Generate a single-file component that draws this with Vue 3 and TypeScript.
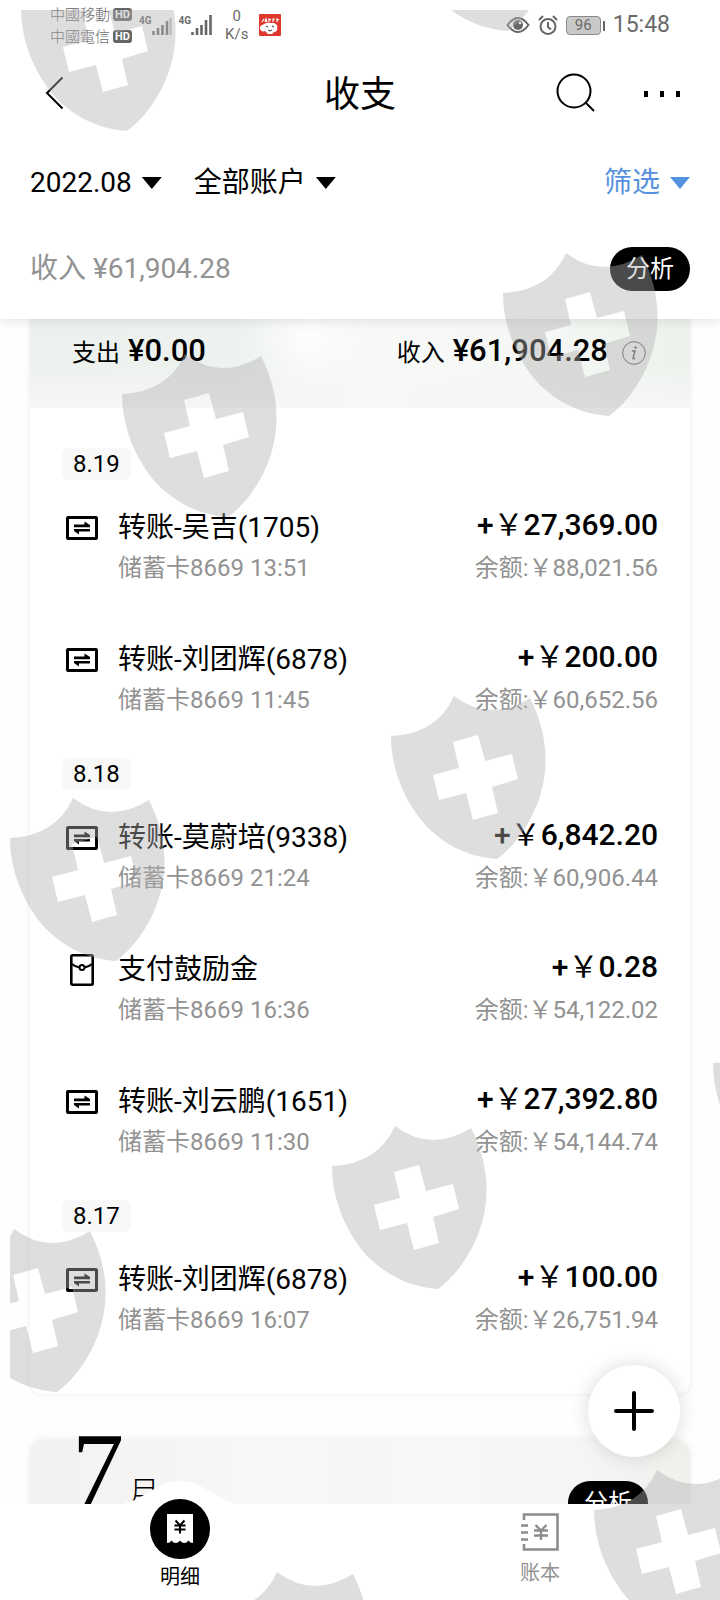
<script setup lang="ts">
interface Entry {
  kind: 'transfer' | 'reward'
  title: string
  detail: string
  amount: string
  balance: string
}

interface Day {
  date: string
  entries: Entry[]
}

// Full-width yen sign, one em wide
const yen = '\uFFE5'

const days: Day[] = [
  {
    date: '8.19',
    entries: [
      { kind: 'transfer', title: '转账-吴吉(1705)', detail: '储蓄卡8669 13:51', amount: '27,369.00', balance: '88,021.56' },
      { kind: 'transfer', title: '转账-刘团辉(6878)', detail: '储蓄卡8669 11:45', amount: '200.00', balance: '60,652.56' },
    ],
  },
  {
    date: '8.18',
    entries: [
      { kind: 'transfer', title: '转账-莫蔚培(9338)', detail: '储蓄卡8669 21:24', amount: '6,842.20', balance: '60,906.44' },
      { kind: 'reward', title: '支付鼓励金', detail: '储蓄卡8669 16:36', amount: '0.28', balance: '54,122.02' },
      { kind: 'transfer', title: '转账-刘云鹏(1651)', detail: '储蓄卡8669 11:30', amount: '27,392.80', balance: '54,144.74' },
    ],
  },
  {
    date: '8.17',
    entries: [
      { kind: 'transfer', title: '转账-刘团辉(6878)', detail: '储蓄卡8669 16:07', amount: '100.00', balance: '26,751.94' },
    ],
  },
]

const carriers: string[] = ['中國移動', '中國電信']

// Top tip of each shield, measured from the watermark layer's corner
const shields: [number, number][] = [
  [74, -42], [455, -142], [556, 243], [175, 344], [444, 686], [63, 788],
  [766, 1013], [385, 1116], [4, 1219], [647, 1460], [267, 1562],
]
</script>

<template>
  <div class="page">
    <header class="top">
      <div class="status">
        <div class="status-left">
          <div class="carriers">
            <div v-for="name in carriers" :key="name" class="carrier">
              <span>{{ name }}</span><b class="hd">HD</b>
            </div>
          </div>
          <div class="signal">
            <b>4G</b>
            <svg width="20" height="20" viewBox="0 0 20 20"><path d="M1.5 16v4M6 13v7M10.5 10v10M15 6v14" stroke="#707070" stroke-width="2.6" /><path d="M18.5 3v17" stroke="#bbb" stroke-width="2" /></svg>
          </div>
          <div class="signal">
            <b>4G</b>
            <svg width="22" height="20" viewBox="0 0 22 20"><path d="M1.5 17v3M6 13v7M10.5 10v10M15 5v15M19.5 0v20" stroke="#666" stroke-width="2.6" /></svg>
          </div>
          <div class="speed"><span>0</span><span>K/s</span></div>
          <svg class="app-mark" width="22" height="22" viewBox="0 0 22 22">
            <rect width="22" height="22" rx="1" fill="#df392f" />
            <path d="M3 8l2-3M6 8l1-3 1 3M10 8V5l2 1M14 8V5h2M18 8V5l2 1" stroke="#fff" stroke-width="1.2" fill="none" />
            <path d="M1 14c0-3 3-3 4-4 3-2 7-1 10-1 3 1 4 3 3 5 1 2-1 4-3 4l-2 2H9l-3-3c-2 1-5 0-5-3z" fill="#fff" />
            <path d="M7 12l2 1M13 12l2 1M9 16q2 2 4 0" stroke="#333" fill="none" />
          </svg>
        </div>
        <div class="status-right">
          <svg width="24" height="18" viewBox="0 0 24 18"><path d="M1.500 9Q12-5 22.500 9 12 23 1.500 9z" fill="none" stroke="#666" stroke-width="2" /><circle cx="12" cy="9" r="5" fill="#666" /><circle cx="14" cy="7" r="1.300" fill="#eee" /></svg>
          <svg width="20" height="20" viewBox="0 0 20 20"><g fill="none" stroke="#666" stroke-width="2"><circle cx="10" cy="11.500" r="7.500" /><path d="M10 7v5l3 2.500M1 5l4-4M19 5l-4-4" /></g></svg>
          <span class="battery">96</span>
          <time>15:48</time>
        </div>
      </div>

      <div class="title-bar">
        <button class="plain" aria-label="返回">
          <svg width="36" height="36" viewBox="0 0 36 36"><path d="M24.500 2.500L9 18l15.500 15.500" fill="none" stroke="#000" stroke-width="2" /></svg>
        </button>
        <h1>收支</h1>
        <div class="title-actions">
          <button class="plain" aria-label="搜索">
            <svg width="40" height="40" viewBox="0 0 40 40"><g fill="none" stroke="#000" stroke-width="2"><circle cx="18" cy="18" r="16.500" /><path d="M30 30l8 8" /></g></svg>
          </button>
          <button class="plain" aria-label="更多">
            <svg width="36" height="40" viewBox="0 0 36 40"><path d="M0 18h4v6H0zM16 18h4v6h-4zM32 18h4v6h-4z" /></svg>
          </button>
        </div>
      </div>

      <div class="filters">
        <button class="plain filter">2022.08<i class="caret"></i></button>
        <button class="plain filter">全部账户<i class="caret"></i></button>
        <button class="plain filter accent">筛选<i class="caret"></i></button>
      </div>

      <div class="summary">
        <span>收入 ¥61,904.28</span>
        <button class="pill-button">分析</button>
      </div>
    </header>

    <main>
      <section class="card">
        <div class="banner">
          <div class="total"><span>支出</span><strong>¥0.00</strong></div>
          <div class="total">
            <span>收入</span><strong>¥61,904.28</strong>
            <button class="plain info" aria-label="说明">
              <svg width="24" height="24" viewBox="0 0 24 24"><g fill="none" stroke="#555"><circle cx="12" cy="12" r="11.300" /><path d="M10 10h3l-2 7.500h2" stroke-width="1.400" /></g><circle cx="13.500" cy="6.500" r="1.200" fill="#555" /></svg>
            </button>
          </div>
        </div>
        <div class="days">
          <section v-for="day in days" :key="day.date" class="day">
            <h2>{{ day.date }}</h2>
            <ul>
              <li v-for="entry in day.entries" :key="entry.detail">
                <span class="kind">
                  <svg v-if="entry.kind === 'transfer'" width="32" height="24" viewBox="0 0 32 24">
                    <rect x="1.500" y="1.500" width="29" height="21" rx=".6" fill="none" stroke="#000" stroke-width="3" />
                    <path d="M8 8.500h10.500V5.500L24 9v2.300H8zM24 13v2.500H13v3L8 15V13z" />
                  </svg>
                  <svg v-else width="24" height="32" viewBox="0 0 24 32">
                    <g fill="none" stroke="#000" stroke-width="2.600"><rect x="1.300" y="1.300" width="21.400" height="29.400" rx="1.200" /><path d="M2 10q3.500 3 7.500 3.500M22 10q-3.500 3-7.500 3.500" stroke-width="2.200" /><circle cx="12" cy="13.500" r="2.500" stroke-width="2" /></g>
                  </svg>
                </span>
                <div class="what">
                  <p class="name">{{ entry.title }}</p>
                  <p class="sub">{{ entry.detail }}</p>
                </div>
                <div class="money">
                  <p class="amount">+<span>{{ yen }}</span>{{ entry.amount }}</p>
                  <p class="sub">余额:{{ yen }}{{ entry.balance }}</p>
                </div>
              </li>
            </ul>
          </section>
        </div>
      </section>

      <section class="card next">
        <div class="month"><b>7</b><span>月</span></div>
        <button class="pill-button">分析</button>
      </section>
    </main>

    <nav>
      <svg class="bump" width="150" height="26" viewBox="0 0 150 26"><path d="M0 26C40 26 46 1 75 1s35 25 75 25z" fill="#fff" /></svg>
      <a href="#details" class="tab active" aria-current="page">
        <svg width="60" height="60" viewBox="0 0 60 60">
          <circle cx="30" cy="30" r="30" />
          <path d="M17 15h26v29q-3 0-4.500-2.500-2 2.500-4.300 2.500T30 41.500Q28 44 25.700 44t-4.200-2.500Q20 44 17 44z" fill="#fff" />
          <path d="M25.500 21.500l4.500 5 4.500-5M30 26v8.500M24.500 26.500h11M24.500 30.500h11" fill="none" stroke="#000" stroke-width="2" />
        </svg>
        <span>明细</span>
      </a>
      <a href="#books" class="tab">
        <svg width="38" height="38" viewBox="0 0 38 38">
          <g fill="none" stroke="#8c8c8c" stroke-width="2.600"><path d="M3 7V1.500h33.500v35H3V31M0 12.500h7M0 19.500h7M0 26.500h7" /><path d="M14.500 12l5.500 5.500 5.500-5.500M20 17v10M13 17.500h14M13 22.500h14" stroke-width="2.300" /></g>
        </svg>
        <span>账本</span>
      </a>
    </nav>

    <button class="add" aria-label="记一笔">
      <svg width="40" height="40" viewBox="0 0 40 40"><path d="M20 2v36M2 20h36" stroke="#000" stroke-width="4" stroke-linecap="round" /></svg>
    </button>

    <div class="watermark" aria-hidden="true">
      <svg width="100%" height="100%">
        <path
          v-for="([x, y], i) in shields"
          :key="i"
          :transform="`translate(${x} ${y})`"
          fill-rule="evenodd"
          d="M0 0Q36 27 76 2C86 22 92 43 91.500 66 91 105 70 143 43 163 16 161-6 151-27 131-48 108-63 75-63 40Q-17 38 0 0zM-1 46L24 39 31 65 58 58 64 83 38 91 44 117 19 124 12 97-15 104-21 79 5 72z"
        />
      </svg>
    </div>
  </div>
</template>

<style>
body { margin: 0; }
</style>

<style scoped>
.page {
  position: relative;
  display: flex;
  flex-direction: column;
  height: 100vh;
  overflow: hidden;
  background: #fff;
  color: #000;
  font-family: Roboto, "Noto Sans CJK SC", sans-serif;
}
svg { display: block; flex: none; }
h1, h2, p, ul { margin: 0; padding: 0; font-weight: 400; }
ul { list-style: none; }
button { font: inherit; cursor: pointer; }
.plain { padding: 0; border: 0; background: none; color: inherit; }

.top {
  position: relative;
  z-index: 1;
  padding-bottom: 11px;
  background: #fff;
  box-shadow: 0 0 12px rgba(0, 0, 0, 0.14);
}
.status {
  display: flex;
  justify-content: space-between;
  align-items: center;
  height: 50px;
  padding: 0 50px;
  color: #6a6a6a;
}
.status-left, .status-right { display: flex; align-items: center; }
.carrier {
  display: flex;
  align-items: center;
  gap: 3px;
  font-family: "Noto Sans CJK TC", sans-serif;
  font-size: 15px;
  font-weight: 300;
  line-height: 22px;
}
.hd {
  border-radius: 3px;
  background: #666;
  color: #fff;
  padding: 0 2px;
  font: 700 11px/13px Roboto, sans-serif;
}
.signal { display: flex; align-items: center; margin-left: 7px; }
.signal b { align-self: flex-start; font-size: 10px; line-height: 12px; }
.speed {
  display: flex;
  flex-direction: column;
  align-items: center;
  margin-left: 12px;
  font-size: 15px;
  line-height: 18px;
}
.app-mark { margin-left: 11px; }
.status-right { gap: 8px; }
.battery {
  position: relative;
  width: 33px;
  border: 1px solid #8a8a8a;
  border-radius: 4px;
  background: #c9c9c9;
  font-size: 15px;
  line-height: 17px;
  text-align: center;
}
.battery::after {
  content: "";
  position: absolute;
  top: 4px;
  right: -5px;
  width: 2px;
  height: 10px;
  background: #666;
}
time { margin-left: 4px; font-size: 23px; line-height: 28px; }

.title-bar {
  display: grid;
  grid-template-columns: 1fr auto 1fr;
  align-items: center;
  height: 86px;
  padding: 0 38px;
}
h1 { padding-top: 4px; font-size: 36px; line-height: 48px; }
.title-bar > .plain { justify-self: start; }
.title-actions { display: flex; justify-content: flex-end; gap: 48px; }
.title-actions .plain:last-child { margin-right: 2px; }

.filters { display: flex; align-items: center; gap: 32px; height: 94px; padding: 0 30px; }
.filter { display: flex; align-items: center; gap: 10px; font-size: 28px; line-height: 40px; }
.caret {
  width: 20px;
  height: 12px;
  background: currentColor;
  clip-path: polygon(0 0, 100% 0, 50% 100%);
}
.accent { margin-left: auto; color: #5591de; }

.summary {
  display: flex;
  justify-content: space-between;
  align-items: center;
  height: 78px;
  padding: 0 30px;
  color: #929292;
  font-size: 28px;
}
.summary span { padding-bottom: 6px; }
.pill-button {
  width: 80px;
  height: 44px;
  padding: 0;
  border: 0;
  border-radius: 22px;
  background: #000;
  color: #fff;
  font-size: 24px;
  line-height: 44px;
}

main { flex: 1; min-height: 0; overflow: hidden; padding: 0 30px; background: #fefefe; }
.card { background: #fff; box-shadow: 0 0 6px rgba(0, 0, 0, 0.08); }
.card:first-child { border-radius: 0 0 12px 12px; }
.banner {
  display: flex;
  justify-content: space-between;
  box-sizing: border-box;
  height: 89px;
  padding: 12px 44px 0 42px;
  background:
    radial-gradient(circle at 42% 20%, rgba(255, 255, 255, 0.8), transparent 14%),
    linear-gradient(to bottom, transparent 50%, #f6f7f6),
    linear-gradient(to right, #edf1ed, #eef2ee 30%, #f8faf7 50%, #f4f7f3 80%, #edf2ed);
}
.total { display: flex; align-items: baseline; height: 44px; gap: 8px; }
.total span { font-size: 24px; }
.total strong { font-size: 31px; font-weight: 500; line-height: 40px; }
.info { align-self: center; margin-left: 6px; }

.days { padding: 40px 32px 16px; }
.day { padding-bottom: 14px; }
h2 {
  width: max-content;
  padding: 0 11px;
  border-radius: 6px;
  background: #f8f8f8;
  font-size: 24px;
  line-height: 32px;
}
li { display: flex; align-items: flex-start; height: 102px; padding-top: 30px; }
.kind {
  display: flex;
  align-items: center;
  justify-content: center;
  width: 32px;
  height: 36px;
  margin: 0 20px 0 4px;
}
.what { flex: 1; }
.name { font-size: 28px; line-height: 36px; }
.sub { margin-top: 6px; color: #929292; font-size: 24px; line-height: 32px; }
.money { text-align: right; }
.amount { padding-bottom: 6px; font-size: 30px; font-weight: 500; line-height: 30px; }
.amount span { font-weight: 400; }

.next {
  display: flex;
  justify-content: space-between;
  align-items: flex-start;
  height: 180px;
  margin-top: 45px;
  padding: 0 42px;
  border-radius: 16px;
  background: linear-gradient(to right, #f4f2f1, #f7f4f4 22%, #f8faf9 40%, #f4f6f5 50%, #f8f8fa 60%, #f5f5f4 85%, #efefec);
}
.month { display: flex; align-items: baseline; gap: 4px; margin-top: -16px; }
.month b { font: 400 104px/92px "Liberation Serif", serif; }
.month span { font-size: 32px; font-weight: 300; }
.next .pill-button { margin-top: 42px; }

nav {
  position: relative;
  display: flex;
  height: 96px;
  background: #fff;
}
.bump { position: absolute; left: 25%; bottom: 94px; margin-left: -75px; }
.tab {
  position: relative;
  flex: 1;
  display: flex;
  flex-direction: column;
  align-items: center;
  justify-content: flex-end;
  gap: 8px;
  padding-bottom: 13px;
  color: #929292;
  font-size: 20px;
  line-height: 28px;
  text-decoration: none;
}
.active { gap: 4px; padding-bottom: 9px; color: #000; }

.add {
  position: absolute;
  right: 40px;
  bottom: 143px;
  display: grid;
  place-items: center;
  width: 92px;
  height: 92px;
  padding: 0;
  border: 0;
  border-radius: 50%;
  background: #fff;
  box-shadow: 0 0 20px rgba(0, 0, 0, 0.14);
}
.watermark {
  position: absolute;
  z-index: 2;
  inset: 10px 0 0 10px;
  overflow: hidden;
  pointer-events: none;
  fill: rgba(176, 176, 176, 0.42);
}
</style>
